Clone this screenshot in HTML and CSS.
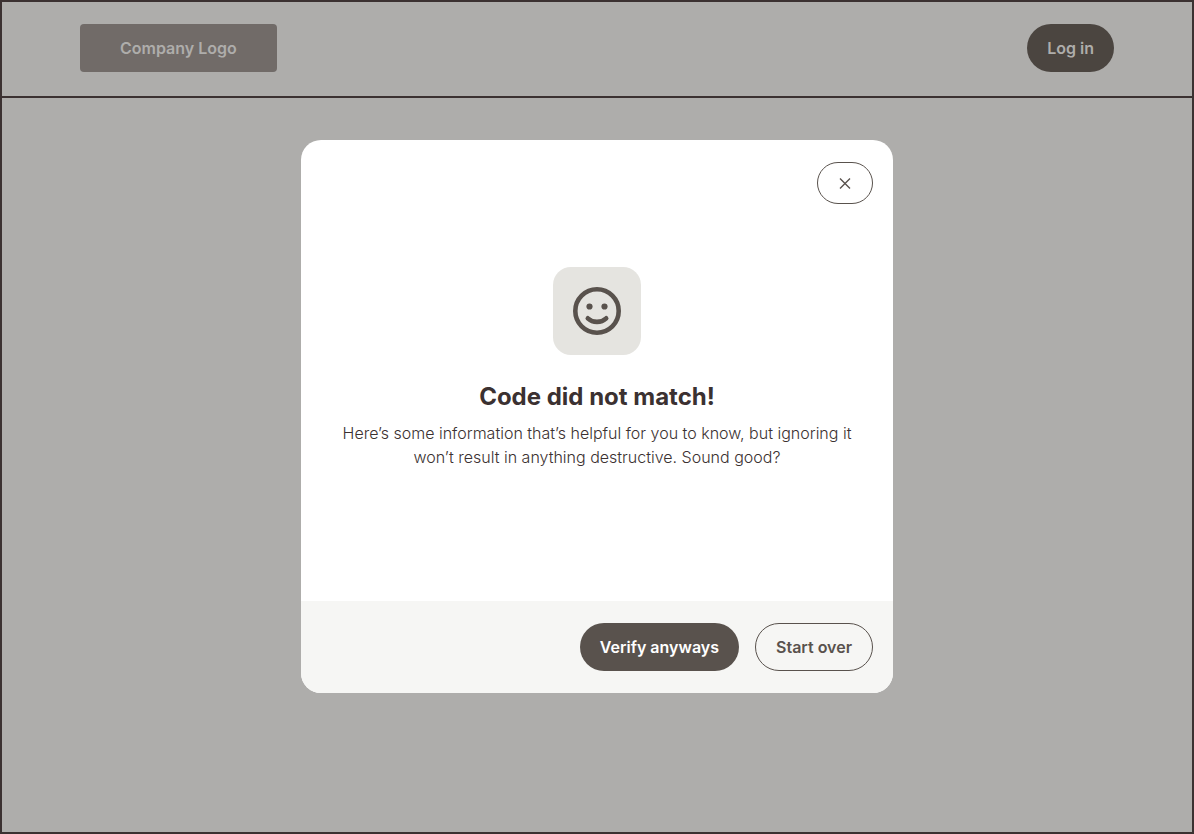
FILE: index.html
```html
<!DOCTYPE html>
<html lang="en">
<head>
<meta charset="UTF-8">
<meta name="viewport" content="width=device-width, initial-scale=1">

<title>Verify code</title>

<link rel="stylesheet" href="styles.css">

</head>

<body>

<div class="page">
	<header class="topbar">
		<a class="logo" href="#">Company Logo</a>
		<button class="btn btn-login" type="button">Log in</button>
	</header>
</div>

<div class="overlay">
	<div class="modal" role="dialog" aria-modal="true" aria-labelledby="modal-title">
		<div class="modal-head">
			<button class="btn-close" type="button" aria-label="Close">
				<svg width="24" height="24" viewBox="0 0 24 24" fill="none" stroke="currentColor" stroke-width="1.4">
					<path d="M7 7.4l10 10M17 7.4l-10 10"/>
				</svg>
			</button>
		</div>

		<div class="modal-body">
			<div class="badge">
				<svg width="48" height="48" viewBox="0 0 48 48" fill="none" stroke="currentColor" stroke-width="4.6" stroke-linecap="round">
					<circle cx="24" cy="24" r="21.7"/>
					<path d="M14.8 31.3c5 4.8 13.4 4.8 18.4 0"/>
					<circle cx="16.5" cy="19.5" r="3.1" fill="currentColor" stroke="none"/>
					<circle cx="31.5" cy="19.5" r="3.1" fill="currentColor" stroke="none"/>
				</svg>
			</div>
			<h1 id="modal-title">Code did not match!</h1>
			<p>Here’s some information that’s helpful for you to know, but ignoring it won’t result in anything destructive. Sound good?</p>
		</div>

		<div class="modal-foot">
			<button class="btn btn-primary" type="button">Verify anyways</button>
			<button class="btn btn-outline" type="button">Start over</button>
		</div>
	</div>
</div>

</body>
</html>
```
FILE: styles.css
```css
* {
	box-sizing: border-box;
}

body {
	margin: 0;
	background-color: #aeadab;
	color: #3b3131;
	font-family: Inter, sans-serif;
	font-size: 16px;
	line-height: 24px;
}

.page {
	min-height: 100vh;
	border: 2px solid #3b3131;
}

.topbar {
	display: flex;
	justify-content: space-between;
	align-items: center;
	padding: 22px 78px 24px;
	border-bottom: 2px solid #3b3131;
}

.logo {
	padding: 12px 40px;
	border-radius: 4px;
	background-color: #716b68;
	color: #aeadab;
	font-weight: 600;
	text-decoration: none;
}

.btn {
	height: 48px;
	padding: 0 20px;
	border: 0;
	border-radius: 24px;
	font: inherit;
	font-weight: 600;
	cursor: pointer;
}

.btn-login {
	background-color: #4b4540;
	color: #aeadab;
}

.overlay {
	position: fixed;
	inset: 0;
	display: flex;
	justify-content: center;
	align-items: center;
	padding: 15px 16px 16px;
}

.modal {
	width: 100%;
	max-width: 592px;
	border-radius: 20px;
	background-color: #fff;
	overflow: hidden;
}

.modal-head {
	display: flex;
	justify-content: flex-end;
	padding: 22px 20px 0;
}

.btn-close {
	display: flex;
	justify-content: center;
	align-items: center;
	width: 56px;
	height: 42px;
	padding: 0;
	border: 1px solid #59524d;
	border-radius: 21px;
	background-color: #fff;
	color: #59524d;
	cursor: pointer;
}

.modal-body {
	padding: 63px 40px 132px;
	text-align: center;
}

.badge {
	display: flex;
	justify-content: center;
	align-items: center;
	width: 88px;
	height: 88px;
	margin: 0 auto 24px;
	border-radius: 18px;
	background-color: #e5e4e0;
	color: #59524d;
}

h1 {
	margin: 0 0 6px;
	font-size: 24px;
	line-height: 36px;
	font-weight: 700;
}

p {
	margin: 0;
	font-weight: 300;
}

.modal-foot {
	display: flex;
	justify-content: flex-end;
	gap: 16px;
	padding: 22px 20px;
	background-color: #f6f6f4;
}

.btn-primary {
	background-color: #59524d;
	color: #fff;
}

.btn-outline {
	border: 1px solid #59524d;
	background-color: transparent;
	color: #59524d;
}
```
